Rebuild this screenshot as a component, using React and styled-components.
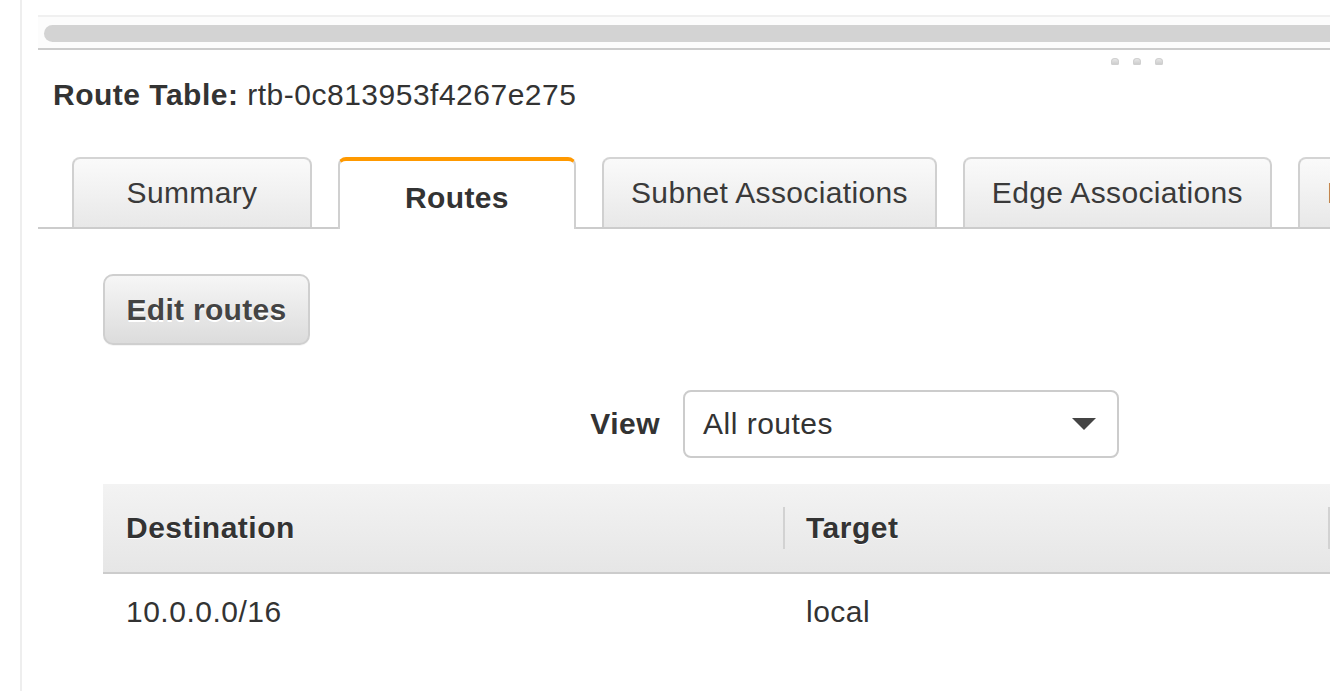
import React from 'react';
import styled, { createGlobalStyle } from 'styled-components';

const GlobalStyle = createGlobalStyle`
  html, body {
    margin: 0;
    padding: 0;
    background: #fff;
  }
  body {
    font-family: 'Liberation Sans', Arial, Helvetica, sans-serif;
    color: #333;
    letter-spacing: 0.5px;
    overflow: hidden;
  }
`;

const Page = styled.div`
  display: flex;
  height: 691px;
  overflow: hidden;
`;

const Gutter = styled.div`
  flex: 0 0 20px;
  border-right: 2px solid #eeeeee;
`;

const Main = styled.div`
  flex: 1;
  min-width: 0;
  margin-left: 16px;
  overflow: hidden;
`;

const ScrollTrack = styled.div`
  margin-top: 15px;
  height: 22px;
  padding: 8px 0 1px 6px;
  background: #fcfcfc;
  border-top: 2px solid #f0f0f0;
  border-bottom: 2px solid #cccccc;
`;

const ScrollThumb = styled.div`
  height: 17px;
  margin-right: -20px;
  border-radius: 9px;
  background: #d3d3d3;
`;

const HandleRow = styled.div`
  display: flex;
  justify-content: flex-end;
  gap: 14px;
  padding: 8px 167px 0 0;
  height: 9px;
`;

const HandleDot = styled.span`
  width: 8px;
  height: 7px;
  border-radius: 4px 4px 2px 2px;
  background: linear-gradient(#ececec, #c8c8c8);
  box-shadow: inset 0 0 0 1px #d0d0d0;
`;

const Title = styled.h2`
  margin: 10px 0 0 15px;
  font-size: 30px;
  line-height: 36px;
  font-weight: normal;
  color: #333;

  strong {
    font-weight: bold;
  }
`;

const TabBar = styled.div`
  display: flex;
  align-items: flex-end;
  gap: 26px;
  margin-top: 44px;
  padding-left: 34px;
  border-bottom: 2px solid #cccccc;
  white-space: nowrap;
  letter-spacing: 0.35px;
`;

const Tab = styled.div`
  flex: 0 0 auto;
  box-sizing: border-box;
  min-width: ${(p) => (p.$active ? 238 : 240)}px;
  height: ${(p) => (p.$active ? 72 : 70)}px;
  margin-bottom: ${(p) => (p.$active ? -2 : 0)}px;
  padding: 0 27px;
  padding-top: ${(p) => (p.$active ? 6 : 0)}px;
  display: flex;
  align-items: center;
  justify-content: center;
  font-size: 30px;
  font-weight: ${(p) => (p.$active ? 'bold' : 'normal')};
  color: ${(p) => (p.$active ? '#333' : '#3a3a3a')};
  border: 2px solid #d0d0d0;
  border-bottom: none;
  border-top: ${(p) => (p.$active ? '4px solid #ff9900' : '2px solid #d4d4d4')};
  border-radius: 8px 8px 0 0;
  background: ${(p) => (p.$active ? '#fff' : 'linear-gradient(#fafafa, #e8e8e8)')};
`;

const Content = styled.div`
  padding: 45px 0 0 65px;
`;

const Button = styled.button`
  display: block;
  box-sizing: border-box;
  width: 207px;
  height: 71px;
  margin: 0;
  padding: 0;
  font-family: inherit;
  font-size: 30px;
  font-weight: bold;
  letter-spacing: 0.3px;
  color: #444;
  text-shadow: 0 2px 0 #fff;
  border: 2px solid #cfcfcf;
  border-radius: 10px;
  background: linear-gradient(#f6f6f6, #dcdcdc);
  box-shadow: 0 1px 0 rgba(0, 0, 0, 0.04);
`;

const ViewRow = styled.div`
  display: grid;
  grid-template-columns: 557px 436px;
  column-gap: 23px;
  align-items: center;
  margin-top: 45px;
`;

const ViewLabel = styled.label`
  text-align: right;
  font-size: 30px;
  font-weight: bold;
  color: #333;
`;

const Select = styled.div`
  box-sizing: border-box;
  height: 68px;
  display: flex;
  align-items: center;
  justify-content: space-between;
  padding: 0 21px 0 18px;
  border: 2px solid #cccccc;
  border-radius: 8px;
  background: #fff;
  font-size: 30px;
  color: #333;
`;

const Caret = styled.span`
  width: 0;
  height: 0;
  border-left: 12px solid transparent;
  border-right: 12px solid transparent;
  border-top: 12px solid #444;
`;

const Table = styled.div`
  margin-top: 26px;
  margin-right: -40px;
`;

const HeaderRow = styled.div`
  display: grid;
  grid-template-columns: 680px 545px 1fr;
  height: 88px;
  background: linear-gradient(#f3f3f3, #e6e6e6);
  border-bottom: 2px solid #cccccc;
`;

const HeaderCell = styled.div`
  display: flex;
  align-items: center;
  padding-left: 23px;
  font-size: 30px;
  font-weight: bold;
  color: #333;
  text-shadow: 0 1px 0 #fff;
  position: relative;

  & + &::before {
    content: '';
    position: absolute;
    left: 0;
    top: 23px;
    bottom: 23px;
    width: 2px;
    background: #d2d2d2;
  }
`;

const BodyRow = styled.div`
  display: grid;
  grid-template-columns: 680px 545px 1fr;
  height: 76px;
`;

const BodyCell = styled.div`
  display: flex;
  align-items: center;
  padding-left: 23px;
  font-size: 30px;
  color: #333;
`;

const tabs = [
  { label: 'Summary' },
  { label: 'Routes', active: true },
  { label: 'Subnet Associations' },
  { label: 'Edge Associations' },
  { label: 'Route Propagation' },
];

export default function App() {
  return (
    <Page>
      <GlobalStyle />
      <Gutter />
      <Main>
        <ScrollTrack>
          <ScrollThumb />
        </ScrollTrack>
        <HandleRow>
          <HandleDot />
          <HandleDot />
          <HandleDot />
        </HandleRow>
        <Title>
          <strong>Route Table:</strong> rtb-0c813953f4267e275
        </Title>
        <TabBar>
          {tabs.map((t) => (
            <Tab key={t.label} $active={t.active}>
              {t.label}
            </Tab>
          ))}
        </TabBar>
        <Content>
          <Button>Edit routes</Button>
          <ViewRow>
            <ViewLabel>View</ViewLabel>
            <Select>
              All routes
              <Caret />
            </Select>
          </ViewRow>
          <Table>
            <HeaderRow>
              <HeaderCell>Destination</HeaderCell>
              <HeaderCell>Target</HeaderCell>
              <HeaderCell />
            </HeaderRow>
            <BodyRow>
              <BodyCell>10.0.0.0/16</BodyCell>
              <BodyCell>local</BodyCell>
              <BodyCell />
            </BodyRow>
          </Table>
        </Content>
      </Main>
    </Page>
  );
}
